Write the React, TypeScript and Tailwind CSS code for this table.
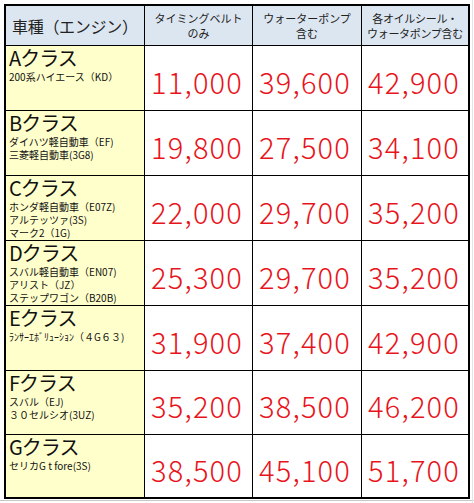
import React from "react";

const rows = [
  { cls: "Aクラス", subs: ["200系ハイエース（KD）"], p: ["11,000", "39,600", "42,900"], h: "h-[64px]" },
  { cls: "Bクラス", subs: ["ダイハツ軽自動車（EF)", "三菱軽自動車(3G8)"], p: ["19,800", "27,500", "34,100"], h: "h-[64px]" },
  { cls: "Cクラス", subs: ["ホンダ軽自動車（E07Z)", "アルテッツァ(3S)", "マーク2（1G)"], p: ["22,000", "29,700", "35,200"], h: "h-[64px]" },
  { cls: "Dクラス", subs: ["スバル軽自動車（EN07)", "アリスト（JZ）", "ステップワゴン（B20B)"], p: ["25,300", "29,700", "35,200"], h: "h-[64px]" },
  { cls: "Eクラス", subs: ["ﾗﾝｻｰｴﾎﾞﾘｭｰｼｮﾝ（４G６３)"], p: ["31,900", "37,400", "42,900"], h: "h-[64px]" },
  { cls: "Fクラス", subs: ["スバル（EJ)", "３０セルシオ(3UZ)"], p: ["35,200", "38,500", "46,200"], h: "h-[63px]" },
  { cls: "Gクラス", subs: ["セリカG t fore(3S)"], p: ["38,500", "45,100", "51,700"], h: "h-[62px]" },
];

const jp = { fontFamily: '"Noto Sans CJK JP", "Noto Sans", sans-serif' };

export default function App() {
  return (
    <div className="w-[474px] h-[503px] bg-white relative overflow-hidden" style={jp}>
      <div className="pt-[4px] pl-[4px]">
        <div className="w-[466px] border-2 border-black bg-black grid grid-cols-[138px_107px_108px_106px] gap-px">
          {/* header */}
          <div className="h-[39px] bg-[#dce6f1] flex items-center pl-[6px] text-[16px] text-[#222] leading-none tracking-[-0.3px]">
            車種（エンジン）
          </div>
          <div className="h-[39px] bg-[#dce6f1] flex flex-col items-center justify-center text-[11px] leading-[15px] text-[#222]">
            <span>タイミングベルト</span>
            <span>のみ</span>
          </div>
          <div className="h-[39px] bg-[#dce6f1] flex flex-col items-center justify-center text-[11px] leading-[15px] text-[#222]">
            <span>ウォーターポンプ</span>
            <span>含む</span>
          </div>
          <div className="h-[39px] bg-[#dce6f1] flex flex-col items-center justify-center text-[11px] leading-[15px] text-[#222] tracking-[-0.3px]">
            <span>各オイルシール・</span>
            <span>ウォータポンプ含む</span>
          </div>
          {rows.map((r) => (
            <React.Fragment key={r.cls}>
              <div className={`${r.h} bg-[#ffffcc] pl-[3px] text-[#111]`}>
                <div className="text-[20px] leading-[24px] tracking-[-1px]">{r.cls}</div>
                {r.subs.map((s) => (
                  <div key={s} className="text-[10px] leading-[13px] whitespace-nowrap">
                    {s}
                  </div>
                ))}
              </div>
              {r.p.map((p, i) => (
                <div
                  key={i}
                  className={`${r.h} bg-white flex items-center pl-[6px] pt-[6px] text-[29px] leading-none text-[#e8141b] font-light tracking-[1.2px]`}
                >
                  {p}
                </div>
              ))}
            </React.Fragment>
          ))}
        </div>
      </div>
      <div className="absolute left-0 right-0 top-[500px] h-px bg-[#c8c8c8]" />
      <div className="absolute left-[472px] top-0 bottom-0 w-px bg-[#e4e4e4]" />
    </div>
  );
}
